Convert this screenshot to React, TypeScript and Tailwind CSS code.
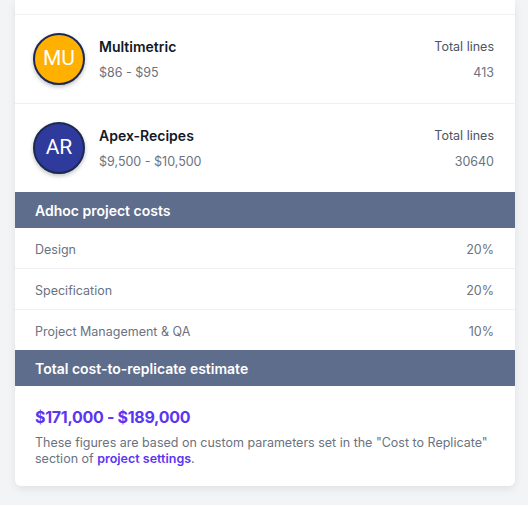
import React from "react";

const font = { fontFamily: "Inter, 'Open Sans', sans-serif" };

function Avatar({ initials, bg }: { initials: string; bg: string }) {
  return (
    <div
      className={`flex h-[52px] w-[52px] shrink-0 items-center justify-center rounded-full border-2 border-[#1c2a52] text-[21px] text-white shadow-[0_2px_4px_rgba(0,0,0,0.25)] ${bg}`}
      style={{ fontFamily: "Roboto, 'Liberation Sans', sans-serif" }}
    >
      {initials}
    </div>
  );
}

function RepoRow({ initials, bg, name, price, lines, border }: { initials: string; bg: string; name: string; price: string; lines: string; border?: boolean }) {
  return (
    <div className={`flex items-center pl-[18px] pr-[21px] ${border ? "h-[89px] border-b border-[#f0f0f2]" : "h-[88px]"}`}>
      <Avatar initials={initials} bg={bg} />
      <div className="ml-[14px] flex flex-1 flex-col gap-[9px]">
        <div className="text-[14px] font-semibold leading-[18px] text-[#111827]">{name}</div>
        <div className="text-[12.5px] leading-[16px] text-[#6b7280]">{price}</div>
      </div>
      <div className="flex flex-col items-end gap-[9px]">
        <div className="text-[12.5px] leading-[18px] text-[#4b5563]">Total lines</div>
        <div className="text-[12.5px] leading-[16px] text-[#6b7280]">{lines}</div>
      </div>
    </div>
  );
}

function CostRow({ label, value, border }: { label: string; value: string; border?: boolean }) {
  return (
    <div className={`flex items-center justify-between pl-5 pr-[21px] pt-[4px] ${border ? "h-[41px] border-b border-[#f0f0f2]" : "h-[40px]"}`}>
      <span className="text-[12.5px] text-[#6b7280]">{label}</span>
      <span className="text-[12.5px] text-[#6b7280]">{value}</span>
    </div>
  );
}

export default function App() {
  return (
    <div className="min-h-[505px] w-full bg-[#f3f4f6]" style={font}>
      <div className="ml-[15px] w-[500px] overflow-hidden rounded-b-md bg-white shadow-[0_3px_8px_rgba(0,0,0,0.08)]">
        <div className="h-[15px] border-b border-[#f0f0f2]" />
        <RepoRow initials="MU" bg="bg-[#ffb000]" name="Multimetric" price="$86 - $95" lines="413" border />
        <RepoRow initials="AR" bg="bg-[#2e3a9c]" name="Apex-Recipes" price="$9,500 - $10,500" lines="30640" />
        <div className="flex h-[36px] items-center bg-[#5f6d8c] px-5 text-[14px] font-semibold text-white">
          Adhoc project costs
        </div>
        <CostRow label="Design" value="20%" border />
        <CostRow label="Specification" value="20%" border />
        <CostRow label="Project Management & QA" value="10%" />
        <div className="flex h-[36px] items-center bg-[#5f6d8c] px-5 text-[14px] font-semibold text-white">
          Total cost-to-replicate estimate
        </div>
        <div className="px-5 pb-[19px] pt-[19px]">
          <div className="text-[16px] font-bold leading-[24px] tracking-[-0.3px] text-[#5b36f2]">$171,000 - $189,000</div>
          <p className="mt-[6px] text-[12.5px] leading-[16px] text-[#6b7280]">
            These figures are based on custom parameters set in the "Cost to Replicate" section of{" "}
            <span className="font-semibold text-[#5b36f2]">project settings</span>.
          </p>
        </div>
      </div>
    </div>
  );
}
